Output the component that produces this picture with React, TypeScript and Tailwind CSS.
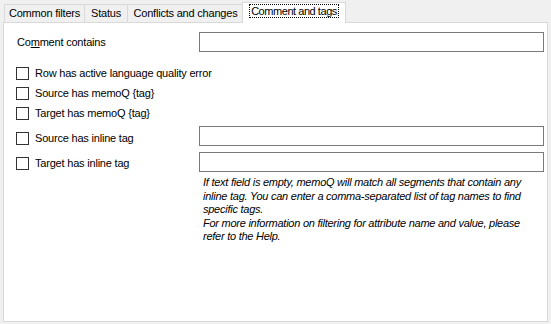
import React from "react";

const font = { fontFamily: '"Liberation Sans", Arial, sans-serif' };

function Check({ label }: { label: React.ReactNode }) {
  return (
    <div className="flex items-center gap-[6px]">
      <div className="h-[13px] w-[13px] border border-[#333] bg-white" />
      <span className="text-[11px] leading-[13px] text-black">{label}</span>
    </div>
  );
}

function Box() {
  return <div className="h-[20px] w-[345px] border border-[#7a7a7a] bg-white" />;
}

export default function App() {
  return (
    <div className="h-[324px] w-[551px] bg-[#f0f0f0] pt-[2px] tracking-[-0.2px]" style={font}>
      <div className="flex items-end pl-[4px] h-[20px]">
        <div className="w-[81px] flex h-[18px] items-center justify-center border border-b-0 border-[#d9d9d9] bg-[#f0f0f0] text-[11px] text-black">Common filters</div>
        <div className="w-[44px] -ml-px flex h-[18px] items-center justify-center border border-b-0 border-[#d9d9d9] bg-[#f0f0f0] text-[11px] text-black">Status</div>
        <div className="w-[117px] -ml-px flex h-[18px] items-center justify-center border border-b-0 border-[#d9d9d9] bg-[#f0f0f0] text-[11px] text-black">Conflicts and changes</div>
        <div className="relative z-10 -mb-px -ml-[2px] flex h-[21px] w-[104px] items-start justify-center border border-b-0 border-[#d9d9d9] bg-white pt-[1px]">
          <span className="border border-dotted border-black px-[1px] text-[11px] leading-[12px] tracking-[-0.45px] text-black">Comment and tags</span>
        </div>
      </div>
      <div className="mx-[3px] h-[300px] border border-[#d9d9d9] bg-white pl-[12px] pr-[3px] pt-[9px]">
        <div className="flex items-center justify-between">
          <span className="pl-[1px] text-[11px] text-black">
            Co<span className="underline">m</span>ment contains
          </span>
          <Box />
        </div>
        <div className="mt-[15px] flex flex-col gap-[7px]">
          <Check label="Row has active language quality error" />
          <Check label="Source has memoQ {tag}" />
          <Check label="Target has memoQ {tag}" />
        </div>
        <div className="mt-[6px] flex items-start justify-between">
          <div className="mt-[6px]">
            <Check label="Source has inline tag" />
          </div>
          <Box />
        </div>
        <div className="mt-[6px] flex items-start justify-between">
          <div className="mt-[5px]">
            <Check label="Target has inline tag" />
          </div>
          <Box />
        </div>
        <div className="ml-[187px] mt-[4px] text-[11px] italic leading-[13.5px] tracking-[-0.25px] text-black">
          <p>If text field is empty, memoQ will match all segments that contain any inline tag. You can enter a comma-separated list of tag names to find specific tags.</p>
          <p>For more information on filtering for attribute name and value, please refer to the Help.</p>
        </div>
      </div>
    </div>
  );
}
